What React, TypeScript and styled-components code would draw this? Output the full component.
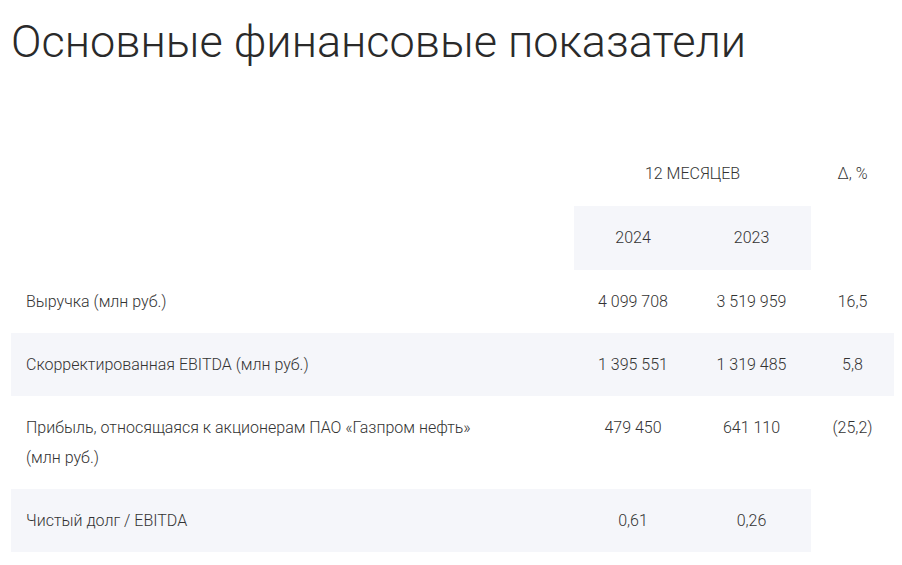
import React from 'react';
import styled, {createGlobalStyle} from 'styled-components';

const GlobalStyle = createGlobalStyle`
  body {
    margin: 0;
    background: #fff;
    font-family: Roboto, "Liberation Sans", sans-serif;
    color: #333;
  }
`

const Page = styled.div`
  padding: 0 8px 0 11px;
`

const Title = styled.h1`
  margin: 15px 0 73px;
  font-size: 45px;
  line-height: 54px;
  font-weight: 300;
  color: #2a2a2a;
  letter-spacing: 0;
`

const Table = styled.table`
  width: 883px;
  border-collapse: collapse;
  table-layout: fixed;
  font-size: 16px;
  line-height: 30px;
  font-weight: 300;
  color: #333;
`

const Col = styled.col<{w: number}>`
  width: ${p => p.w}px;
`

const HeadCell = styled.th<{shaded?: boolean}>`
  padding: 17px 0;
  font-weight: 300;
  text-align: center;
  background: ${p => (p.shaded ? '#f5f6fa' : 'transparent')};
`

const Row = styled.tr<{shaded?: boolean}>`
  background: ${p => (p.shaded ? '#f5f6fa' : 'transparent')};
`

const Label = styled.td`
  padding: 16.5px 85px 16.5px 15px;
  text-align: left;
  vertical-align: top;
`

const Value = styled.td<{blank?: boolean}>`
  padding: 16.5px 0;
  text-align: center;
  vertical-align: top;
  background: ${p => (p.blank ? '#fff' : 'inherit')};
`

type Line = {
  label: string;
  y2024: string;
  y2023: string;
  delta?: string;
};

const lines: Line[] = [
  {label: 'Выручка (млн руб.)', y2024: '4 099 708', y2023: '3 519 959', delta: '16,5'},
  {label: 'Скорректированная EBITDA (млн руб.)', y2024: '1 395 551', y2023: '1 319 485', delta: '5,8'},
  {
    label: 'Прибыль, относящаяся к акционерам ПАО «Газпром нефть» (млн руб.)',
    y2024: '479 450',
    y2023: '641 110',
    delta: '(25,2)',
  },
  {label: 'Чистый долг / EBITDA', y2024: '0,61', y2023: '0,26'},
];

function App() {
  return (
    <Page>
      <GlobalStyle/>
      <Title>Основные финансовые показатели</Title>
      <Table>
        <colgroup>
          <Col w={563}/>
          <Col w={118}/>
          <Col w={119}/>
          <Col w={83}/>
        </colgroup>
        <thead>
          <tr>
            <HeadCell/>
            <HeadCell colSpan={2}>12 МЕСЯЦЕВ</HeadCell>
            <HeadCell>Δ, %</HeadCell>
          </tr>
          <tr>
            <HeadCell/>
            <HeadCell shaded>2024</HeadCell>
            <HeadCell shaded>2023</HeadCell>
            <HeadCell/>
          </tr>
        </thead>
        <tbody>
          {lines.map((l, i) => (
            <Row key={l.label} shaded={i % 2 === 1}>
              <Label>{l.label}</Label>
              <Value>{l.y2024}</Value>
              <Value>{l.y2023}</Value>
              <Value blank={!l.delta}>{l.delta}</Value>
            </Row>
          ))}
        </tbody>
      </Table>
    </Page>
  );
}

export default App;
